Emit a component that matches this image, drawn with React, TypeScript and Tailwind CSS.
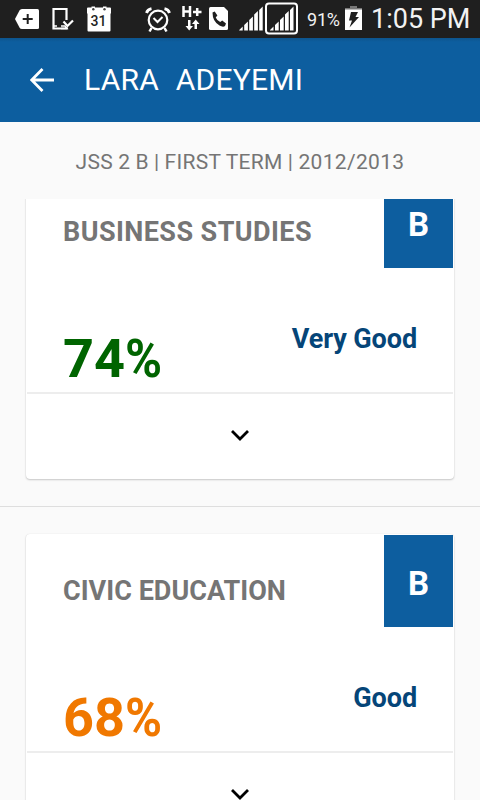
import React from "react";

function SignalBars() {
  return (
    <path fill="#fff" d="M0 24V23.500L3.500 20V24ZM5 24V18.500L8.700 15V24ZM10 24V13.500L13.700 10V24ZM15 24V8L18.700 4.500V24ZM20 24V3.500L23.500 0V24Z" />
  );
}

function StatusBar() {
  return (
    <header className="flex h-[38px] shrink-0 items-start bg-[#1f1f1f] text-[#f2f2f2]">
      <svg className="ml-[15px] shrink-0" width="25" height="38">
        <path d="M0 19L4.500 10.500Q5.300 9 7 9H22.500Q24 9 24 10.500V27.500Q24 29 22.500 29H7Q5.300 29 4.500 27.500Z" fill="#fff" />
        <path d="M12.700 14v10M7.700 19h10" stroke="#1f1f1f" strokeWidth="2" />
      </svg>
      <svg className="ml-3 shrink-0" width="22" height="38" fill="none">
        <path d="M14.500 20V9H1.500V28.500H14.500V27" stroke="#fff" strokeWidth="2.200" />
        <path d="M2 26H5M9 26h4l2 2.500H9" stroke="#fff" strokeWidth="1.500" />
        <path d="M11.500 21.500l4 4.500 5.500-5.500" stroke="#fff" strokeWidth="2.200" />
      </svg>
      <svg className="ml-[13px] shrink-0" width="25" height="38">
        <path d="M1 7.500H4.500V6.500H8V7.500H16V6.500H19.500V7.500H23Q24 7.500 24 8.500V13L23.500 14V30.500Q23.500 31.500 22.500 31.500H1.500Q.500 31.500 .500 30.500V14L0 13V8.500Q0 7.500 1 7.500Z" fill="#fff" />
        <circle cx="6.300" cy="9.200" r="1.200" fill="#444" />
        <circle cx="17.500" cy="9.200" r="1.200" fill="#444" />
        <text x="11.500" y="26" textAnchor="middle" fill="#1f1f1f" className="font-['Roboto',sans-serif] text-[14px] font-medium">31</text>
      </svg>
      <svg className="ml-[33px] shrink-0" width="26" height="38" fill="none" stroke="#fff">
        <circle cx="13" cy="20" r="9.300" strokeWidth="2.200" />
        <path d="M1.500 13Q2.500 9.500 6.500 8.700M24.500 13Q23.500 9.500 19.500 8.700" strokeWidth="2.800" />
        <path d="M8.500 18l4 4 5-5" strokeWidth="2" />
        <path d="M6.500 28l-2 3.500M19.500 28l2 3.500" strokeWidth="2.500" />
      </svg>
      <svg className="ml-[11px] shrink-0" width="20" height="38">
        <path d="M1.500 6v11M8 6v11M1.500 11.500h7M11 12h8.500M15.200 8v8" stroke="#fff" strokeWidth="2.500" fill="none" />
        <path d="M6 20h2.500v6h2.500L7.200 30.500 3.500 26H6ZM12.500 29v-5H10L13.700 19.500l3.800 4.500H15V29Z" fill="#fff" />
      </svg>
      <svg className="ml-[7px] shrink-0" width="20" height="38">
        <path d="M0 8.500Q0 7 1.500 7H15L19 11V28.500Q19 30 17.500 30H1.500Q0 30 0 28.500Z" fill="#fff" />
        <path d="M3.500 12.500l2.200-1 2.700 4-1.700 2q1.300 3 4.500 4.500l2-1.500 3.800 3-1 2.500q-2 1.500-5.500-.5-7-4-7-13Z" fill="#1f1f1f" />
      </svg>
      <svg className="ml-[10px] shrink-0" width="60" height="38">
        <g transform="translate(0.200 6.500)"><SignalBars /></g>
        <rect x="27" y="3.500" width="31" height="30" rx="3" fill="none" stroke="#fff" strokeWidth="2" />
        <g transform="translate(31 6.500)"><SignalBars /></g>
      </svg>
      <span className="ml-2 mt-[9px] w-[38px] shrink-0 whitespace-nowrap text-[18px] leading-[22px] tracking-[-0.2px]">91%</span>
      <svg className="shrink-0" width="17" height="38">
        <path d="M5 6h7v2h5v3H0V8h5Z" fill="#777" />
        <path d="M0 9.500h17V30H0Z" fill="#fff" />
        <path d="M6 12h7l-2.500 5H14L4.500 27.500l2.500-7H4Z" fill="#1f1f1f" />
      </svg>
      <span className="ml-[9px] mt-[3px] whitespace-nowrap text-[27px] leading-8">1:05 PM</span>
    </header>
  );
}

type Subject = { name: string; nameSpacing: string; score: string; scoreColor: string; remark: string; grade: string };

const subjects: Subject[] = [
  { name: "BUSINESS STUDIES", nameSpacing: "tracking-[0.43px]", score: "74", scoreColor: "text-[#006400]", remark: "Very Good", grade: "B" },
  { name: "CIVIC EDUCATION", nameSpacing: "tracking-[0.03px]", score: "68", scoreColor: "text-[#f07800]", remark: "Good", grade: "B" },
];

function SubjectCard({ subject }: { subject: Subject }) {
  return (
    <li className="h-[359px] border-b border-[#dedede] px-[26px] pt-[27px]">
      <article className="h-[304px] rounded-[4px] bg-white px-px pt-px shadow-[0_1px_2px_rgba(0,0,0,0.2),0_0_1px_rgba(0,0,0,0.12)]">
        <div className="flex h-[218px] flex-col border-b-2 border-[#ededed]">
          <div className="flex h-[92px] justify-between">
            <h2 className={"ml-9 mt-10 whitespace-nowrap text-[27px] font-bold leading-8 text-[#757575] " + subject.nameSpacing}>{subject.name}</h2>
            <div className="flex h-[92px] w-[69px] items-center justify-center bg-[#0d5e9f] pt-1.5 text-[33px] font-bold text-white">{subject.grade}</div>
          </div>
          <div className="flex justify-between pl-9 pr-9">
            <span className={"mt-[59px] flex text-[54px] font-bold leading-[64px] " + subject.scoreColor}>
              {subject.score}
              <span className="origin-left scale-x-[0.93]">%</span>
            </span>
            <span className="mt-[55px] whitespace-nowrap text-[27px] font-bold leading-8 tracking-[-0.1px] text-[#054578]">{subject.remark}</span>
          </div>
        </div>
        <button className="flex h-[85px] w-full justify-center pt-[34px]" aria-label="Show details">
          <svg width="20" height="16" fill="none">
            <path d="M2 3l8 8 8-8" stroke="#000" strokeWidth="2.800" />
          </svg>
        </button>
      </article>
    </li>
  );
}

export default function App() {
  return (
    <div className="flex h-[800px] w-[480px] flex-col overflow-hidden bg-[#fafafa] font-['Roboto',sans-serif]">
      <StatusBar />
      <nav className="flex h-[84px] shrink-0 items-center bg-[#0d5e9f] bg-linear-to-b from-[#0d548d] to-[#0d5e9f] to-[4px]">
        <svg className="ml-[30px] shrink-0" width="24" height="26" fill="none">
          <path d="M12.500 2L1.700 13l10.800 11M2 13h22" stroke="#fff" strokeWidth="2.800" />
        </svg>
        <h1 className="ml-[30px] whitespace-pre text-[30px] leading-9 tracking-[0.25px] text-white [word-spacing:0.6px]">LARA  ADEYEMI</h1>
      </nav>
      <p className="h-[77px] shrink-0 whitespace-nowrap pt-[26px] text-center text-[21px] leading-7 tracking-[0.32px] text-[#757575] [word-spacing:-0.4px]">JSS 2 B | FIRST TERM | 2012/2013</p>
      <main className="min-h-0 flex-1 overflow-hidden">
        <ul className="-mt-[51px]">
          {subjects.map((subject) => (
            <SubjectCard key={subject.name} subject={subject} />
          ))}
        </ul>
      </main>
    </div>
  );
}
